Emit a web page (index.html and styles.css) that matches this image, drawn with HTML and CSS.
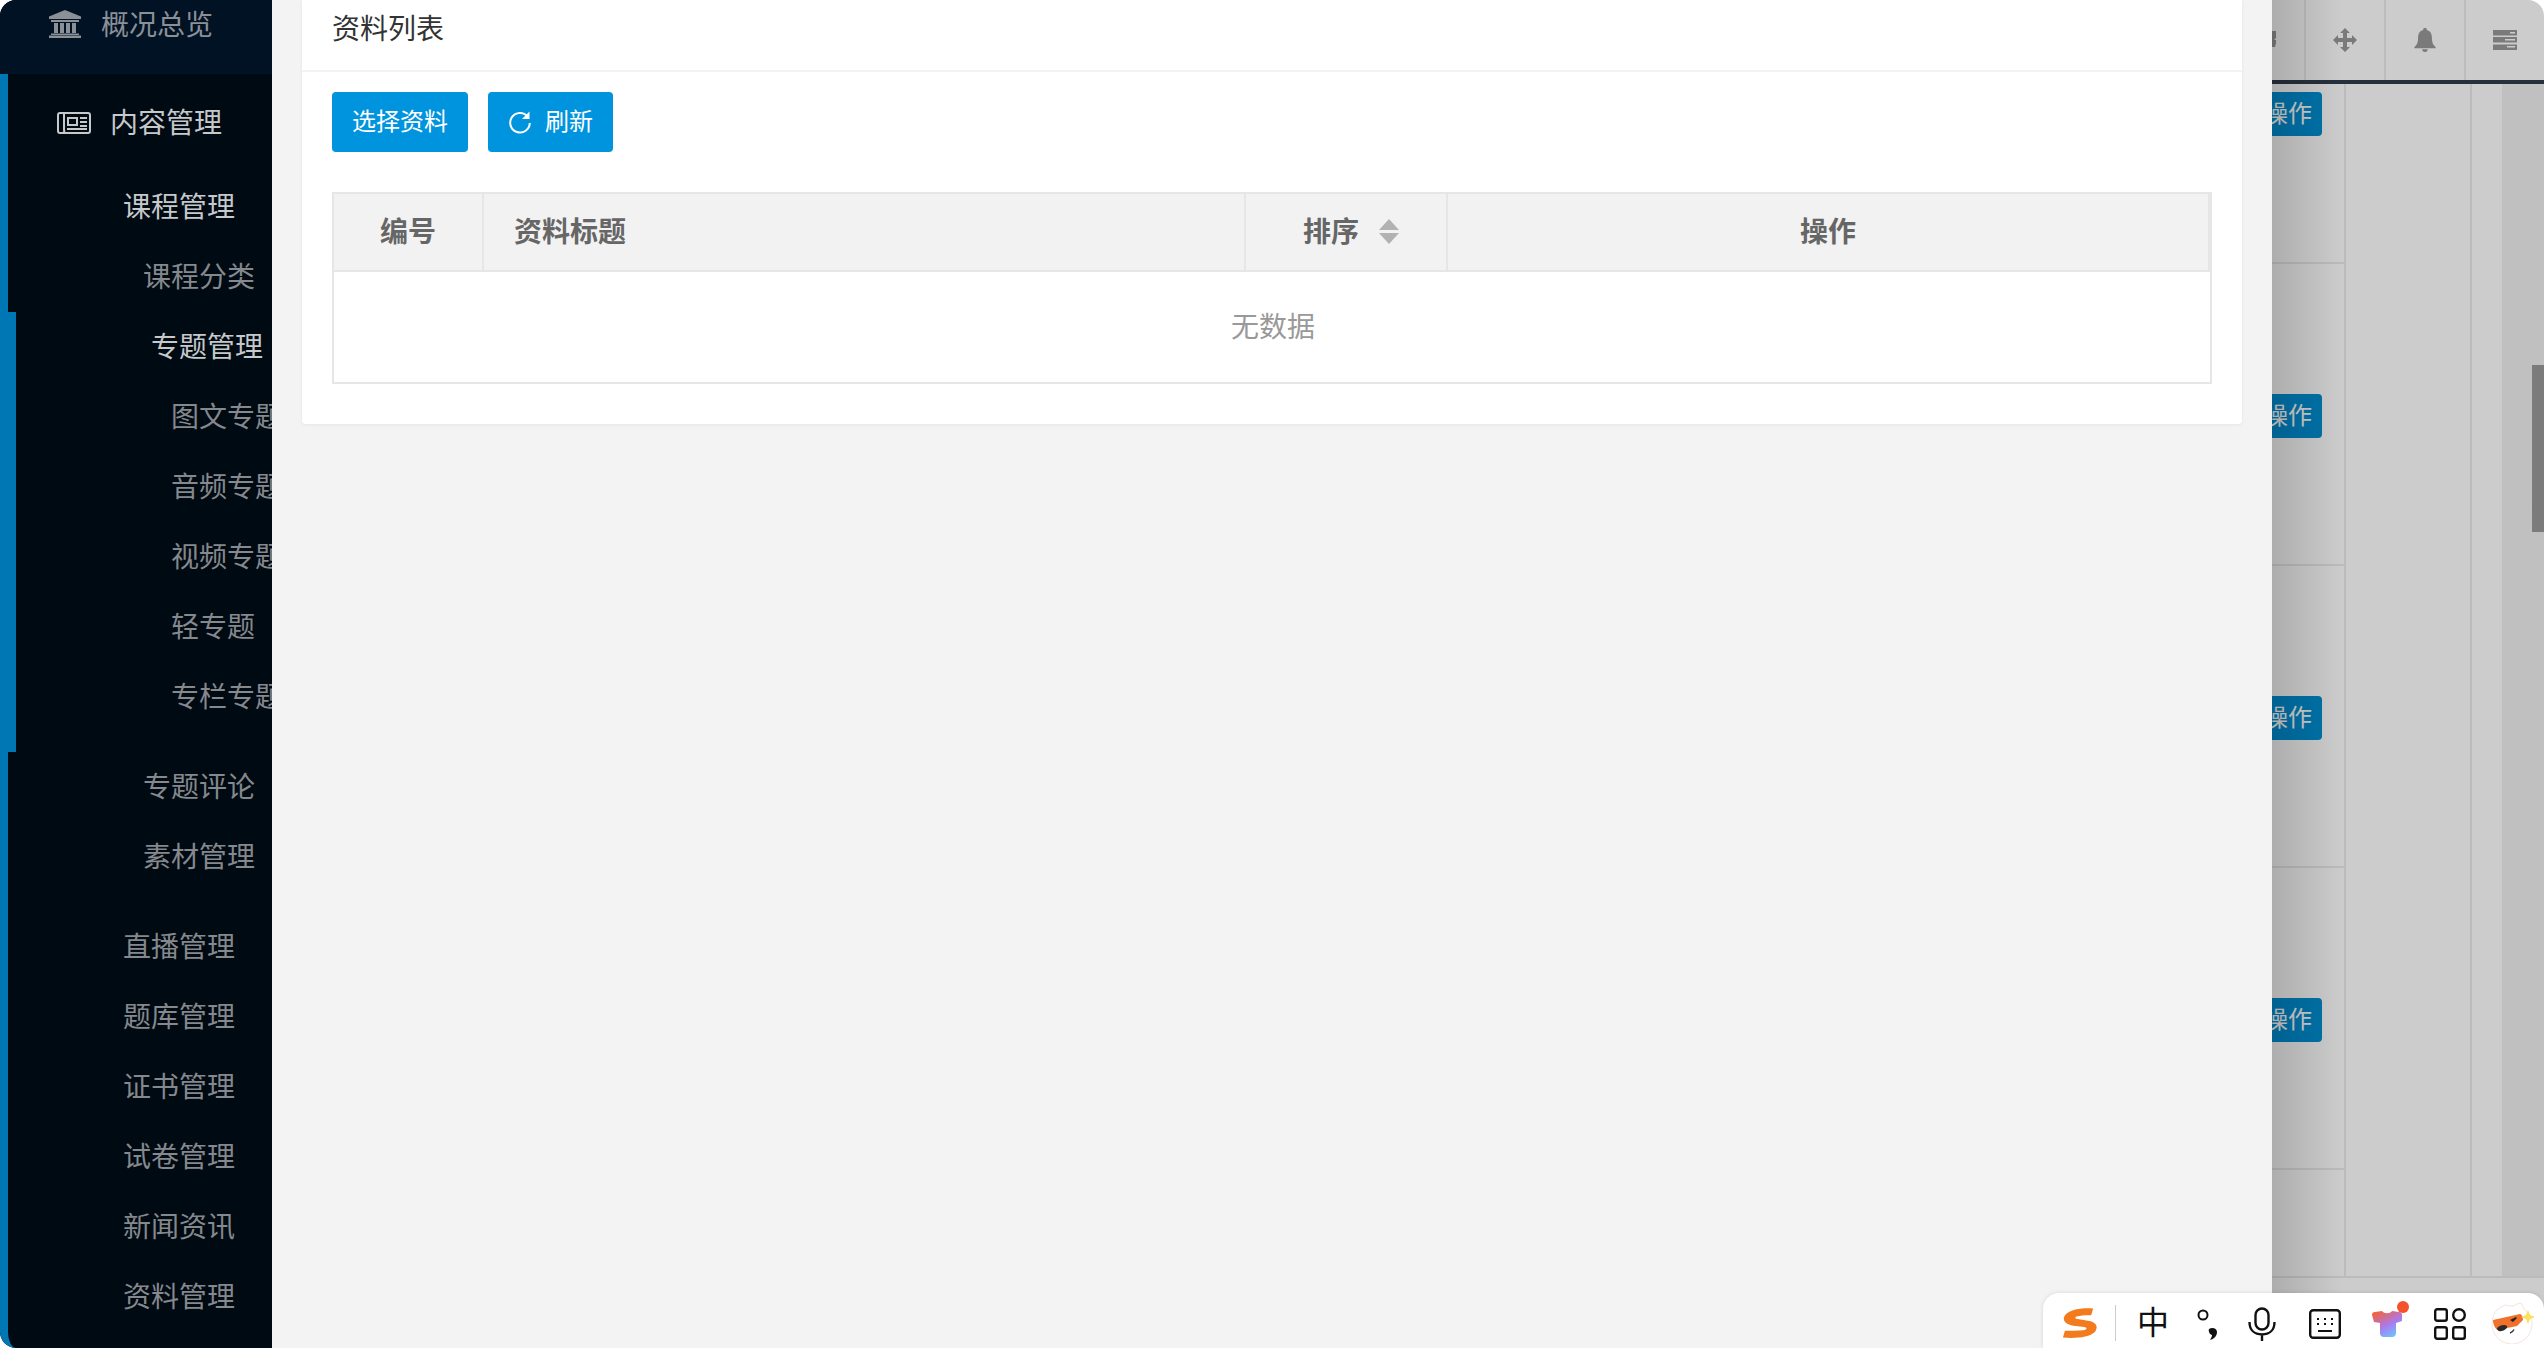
FILE: index.html
```html
<!DOCTYPE html>
<html lang="zh-CN">
<head>
<meta charset="utf-8">
<title>资料列表</title>
<link rel="stylesheet" href="styles.css">
</head>
<body>
<div class="app">
  <aside class="sidebar">
    <div class="nav-top">
      <svg class="ico-bank" viewBox="0 0 32 28"><path d="M16 0 32 6.500V9H0V6.500Z"/><path d="M2 10h28v2H2zM5 13h4v10H5zM11 13h4v10h-4zM17 13h4v10h-4zM23 13h4v10h-4zM2 23.500h28V25H2zM0 25.500h32V28H0z"/></svg>
      <span>概况总览</span>
    </div>
    <div class="group">
      <div class="nav-head">
        <svg class="ico-news" viewBox="0 0 34 22"><rect x="1" y="1" width="32" height="20" rx="2" fill="none" stroke="currentColor" stroke-width="2"/><path d="M7 1v17a2 2 0 0 1-2 3" fill="none" stroke="currentColor" stroke-width="2"/><path d="M10 5h11v9H10zM12 7v5h7V7zM23 5h7v2h-7zM23 9h7v2h-7zM23 13h7v2h-7zM10 16h20v2H10z" fill="currentColor" fill-rule="evenodd"/></svg>
        <span class="head-text">内容管理</span>
      </div>
      <div class="nav-row lv1 on">课程管理</div>
      <div class="nav-row lv2">课程分类</div>
      <div class="topic">
        <div class="nav-row lv2b on">专题管理</div>
        <div class="nav-row lv3">图文专题</div>
        <div class="nav-row lv3">音频专题</div>
        <div class="nav-row lv3">视频专题</div>
        <div class="nav-row lv3">轻专题</div>
        <div class="nav-row lv3">专栏专题</div>
      </div>
      <div class="nav-row lv2">专题评论</div>
      <div class="nav-row lv2 gap-after">素材管理</div>
      <div class="nav-row lv1">直播管理</div>
      <div class="nav-row lv1">题库管理</div>
      <div class="nav-row lv1">证书管理</div>
      <div class="nav-row lv1">试卷管理</div>
      <div class="nav-row lv1">新闻资讯</div>
      <div class="nav-row lv1">资料管理</div>
    </div>
  </aside>

  <main class="panel">
    <section class="card">
      <header class="card-head">资料列表</header>
      <div class="card-body">
        <div class="toolbar">
          <button class="btn">选择资料</button>
          <button class="btn">
            <svg class="ico-refresh" viewBox="0 0 22 24"><path d="M18.600 6.500A9.800 9.800 0 1 0 20.800 13" fill="none" stroke="#fff" stroke-width="2"/><path d="M20.500 1.500V9h-7.500z" fill="#fff"/></svg>
            <span>刷新</span>
          </button>
        </div>
        <table class="grid">
          <colgroup><col class="c1"><col class="c2"><col class="c3"><col class="c4"></colgroup>
          <thead>
            <tr>
              <th>编号</th>
              <th class="left">资料标题</th>
              <th><span class="sort-wrap">排序<span class="sort"><i class="up"></i><i class="down"></i></span></span></th>
              <th>操作</th>
            </tr>
          </thead>
          <tbody>
            <tr><td colspan="4" class="empty">无数据</td></tr>
          </tbody>
        </table>
      </div>
    </section>
  </main>

  <div class="under">
    <div class="under-head">
      <div class="hcell first"><svg class="ico-clip" viewBox="0 0 4 16"><path d="M0 0h4v7L2 9h2v3l-1 4H0z"/></svg></div>
      <div class="hcell">
        <svg class="ico-h" viewBox="0 0 24 24"><path d="M12 0 17 5H14V10H19V7L24 12 19 17V14H14V19H17L12 24 7 19H10V14H5V17L0 12 5 7V10H10V5H7Z"/></svg>
      </div>
      <div class="hcell">
        <svg class="ico-h" viewBox="0 0 24 26"><path d="M12 0a1.800 1.800 0 0 1 1.800 2.300C18 3.300 19.500 6.500 19.500 11c0 5 1.500 7.500 4 9.500v1.500H.5v-1.500c2.500-2 4-4.500 4-9.500 0-4.500 1.500-7.700 5.700-8.700A1.800 1.800 0 0 1 12 0zM9 23h6a3 3 0 0 1-6 0z"/></svg>
      </div>
      <div class="hcell last">
        <svg class="ico-h" viewBox="0 0 24 20"><path fill-rule="evenodd" d="M0 0h24v5.500H0zM17 2v1.500h5V2zM0 7h24v5.500H0zM12 9v1.500h10V9zM0 14.500h24V20H0zM14 16v1.500h8V16z"/></svg>
      </div>
    </div>
    <div class="under-main">
      <div class="col-ops">
        <div class="row first"><button class="op">操作</button></div>
        <div class="row"><button class="op">操作</button></div>
        <div class="row"><button class="op">操作</button></div>
        <div class="row"><button class="op">操作</button></div>
        <div class="row end"></div>
      </div>
      <div class="col-mid"></div>
      <div class="col-narrow"></div>
      <div class="track"><div class="thumb"></div></div>
    </div>
    <div class="under-foot"></div>
  </div>

  <div class="ime">
    <svg class="i-s" viewBox="0 0 38 32"><path d="M33 1C22 0 6 2 3 10c-1 6 5 8 12 9l9 1c3 .5 3 3-1 3.500-6 .5-14 .5-19 .5l-2 7c13 1 27 0 33-6 4-6 0-10-6-11l-12-2c-3-.5-3-2.500 0-3 4-1 9-1 14-1z" fill="#f37b1e"/></svg>
    <span class="i-sep"></span>
    <span class="i-zh">中</span>
    <svg class="i-punct" viewBox="0 0 22 32"><circle cx="6" cy="6" r="4.500" fill="none" stroke="#111" stroke-width="2"/><path d="M12 20c3-2 8-1 8 3 0 4-3 7-7 8 1-2 2-3 2-5-2 0-4-4-3-6z" fill="#111"/></svg>
    <svg class="i-mic" viewBox="0 0 28 34"><rect x="7.500" y="1.500" width="13" height="21" rx="6.500" fill="none" stroke="#111" stroke-width="2.400"/><path d="M1.500 15c0 8 5 12.500 12.500 12.500S26.500 23 26.500 15M14 27v7" fill="none" stroke="#111" stroke-width="2.400"/></svg>
    <svg class="i-kbd" viewBox="0 0 32 30"><rect x="1.200" y="1.200" width="29.600" height="27.600" rx="3" fill="none" stroke="#111" stroke-width="2.400"/><path d="M8 9h2v2H8zM15 9h2v2h-2zM22 9h2v2h-2zM8 14h2v2H8zM15 14h2v2h-2zM22 14h2v2h-2zM9 21h14v2H9z" fill="#111"/></svg>
    <svg class="i-shirt" viewBox="0 0 37 38"><defs><linearGradient id="shirtg" x1=".2" y1="0" x2=".8" y2="1"><stop offset="0" stop-color="#f5603a"/><stop offset=".55" stop-color="#a97bf0"/><stop offset="1" stop-color="#66ccff"/></linearGradient></defs><path d="M0 15c0-2 1-3 3-3l7-1c2 3 8 3 10 0l7 1c2 0 3 1 3 3l0 6-6 2v10c0 2-1 4-4 4h-8c-3 0-4-2-4-4V23l-6-1z" fill="url(#shirtg)"/><circle cx="31" cy="7" r="6" fill="#f4512c"/></svg>
    <svg class="i-apps" viewBox="0 0 32 32"><rect x="1.200" y="1.200" width="11.600" height="11.600" rx="2" fill="none" stroke="#111" stroke-width="2.400"/><circle cx="25" cy="7" r="5.800" fill="none" stroke="#111" stroke-width="2.400"/><rect x="1.200" y="19.200" width="11.600" height="11.600" rx="2" fill="none" stroke="#111" stroke-width="2.400"/><rect x="19.200" y="19.200" width="11.600" height="11.600" rx="2" fill="none" stroke="#111" stroke-width="2.400"/></svg>
    <svg class="i-mascot" viewBox="0 0 44 42"><path d="M7 8c3-2 5-4 8-5 3 1 5 1 8 1 3-1 5-3 8-3 1 2 2 4 3 6 5 4 8 9 8 15a20 20 0 0 1-40 0C2 16 4 11 7 8z" fill="#fff" stroke="#f5e4df"/><path d="M3 18 30 12c2 0 3 4 3 6l-6 6-20 4c-3-3-4-7-4-10z" fill="#f0702c"/><path d="M20 18c2-1 4-2 6-3l1 1-4 4z" fill="#222"/><path d="M7 26c3-3 8-4 10-2 1 3-5 6-8 5-1 0-2-2-2-3z" fill="#2a2a2a"/><path d="M20 31c2-.5 3-1.500 4-3.500" fill="none" stroke="#333" stroke-width="1.500"/><path d="M38 8l2 5 5 2-5 2-2 5-2-5-5-2 5-2z" fill="#f9e15c"/></svg>
  </div>
</div>
</body>
</html>
```
FILE: styles.css
```css
* { box-sizing: border-box; }
html, body { margin: 0; padding: 0; background: #fff; }
body { font-family: "Noto Sans CJK SC", "Liberation Sans", sans-serif; }
.app {
  position: relative;
  display: flex;
  width: 2544px;
  height: 1348px;
  overflow: hidden;
}

/* sidebar */
.sidebar {
  width: 272px;
  flex: none;
  height: 1348px;
  display: flex;
  flex-direction: column;
  overflow: hidden;
  border-radius: 16px 0 0 16px;
  background: #000a13;
  font-size: 28px;
  white-space: nowrap;
}
.nav-top {
  height: 74px;
  flex: none;
  background: #001223;
  color: #8b9097;
  display: flex;
  align-items: flex-start;
  padding-left: 49px;
  line-height: 46px;
}
.ico-bank { width: 32px; height: 28px; margin: 10px 20px 0 0; fill: #8b9097; }
.group {
  flex: 1;
  border-left: 8px solid #0077b5;
  border-bottom-left-radius: 16px;
  padding-top: 14px;
  color: #85888c;
}
.nav-head {
  height: 70px;
  margin-bottom: 14px;
  padding-left: 49px;
  display: flex;
  align-items: center;
  color: #c6c8ca;
}
.head-text { margin-bottom: 4px; }
.ico-news { width: 34px; height: 22px; margin-right: 19px; flex: none; color: #c6c8ca; }
.nav-row { height: 70px; line-height: 66px; }
.nav-row.on { color: #c6c8ca; }
.lv1 { padding-left: 115px; }
.lv2 { padding-left: 135px; }
.lv2b { padding-left: 135px; }
.lv3 { padding-left: 155px; }
.gap-after { margin-bottom: 20px; }
.topic {
  border-left: 8px solid #0077b5;
  padding-bottom: 20px;
}

/* main panel */
.panel {
  width: 2000px;
  flex: none;
  height: 1348px;
  background: #f3f3f3;
  padding: 0 30px;
}
.card {
  background: #fff;
  border-radius: 0 0 4px 4px;
  box-shadow: 0 1px 4px rgba(0, 0, 0, .06);
}
.card-head {
  height: 72px;
  line-height: 54px;
  padding-left: 30px;
  border-bottom: 2px solid #f3f3f3;
  font-size: 28px;
  color: #333;
}
.card-body { padding: 20px 30px 40px; }
.toolbar { display: flex; gap: 20px; margin-bottom: 40px; }
.btn {
  height: 60px;
  padding: 0 20px 6px;
  border: 0;
  border-radius: 4px;
  background: #0094de;
  color: #fff;
  font: inherit;
  font-size: 24px;
  display: flex;
  align-items: center;
}
.ico-refresh { width: 22px; height: 24px; margin: 6px 14px 0 1px; }
.grid {
  width: 1880px;
  table-layout: fixed;
  border-collapse: separate;
  border-spacing: 0;
  border: 2px solid #e6e6e6;
  font-size: 28px;
}
.c1 { width: 150px; }
.c2 { width: 762px; }
.c3 { width: 202px; }
.c4 { width: 762px; }
.grid th {
  height: 78px;
  padding: 0 0 4px;
  background: #f2f2f2;
  border-right: 2px solid #e6e6e6;
  border-bottom: 2px solid #e6e6e6;
  color: #666;
  font-weight: 700;
  text-align: center;
}
.grid th.left { text-align: left; padding-left: 30px; }
.sort-wrap { display: inline-flex; align-items: center; margin-left: 10px; }
.sort { display: inline-flex; flex-direction: column; gap: 3px; margin: 2px 0 0 20px; }
.sort i { display: block; width: 0; height: 0; border-left: 10px solid transparent; border-right: 10px solid transparent; }
.sort .up { border-bottom: 11px solid #b2b2b2; }
.sort .down { border-top: 11px solid #b2b2b2; }
.empty { height: 110px; padding: 0 0 4px 2px; text-align: center; color: #999; }

/* dimmed page behind the panel */
.under {
  position: relative;
  width: 272px;
  flex: none;
  height: 1348px;
  overflow: hidden;
  display: flex;
  flex-direction: column;
  border-top-right-radius: 16px;
  background: #fff;
}
.under::after {
  content: "";
  position: absolute;
  inset: 0;
  background: linear-gradient(90deg, rgba(0, 0, 0, .32), rgba(0, 0, 0, .2) 70px);
}
.under-head {
  height: 84px;
  flex: none;
  display: flex;
  border-bottom: 4px solid #2f3c4b;
}
.hcell {
  width: 80px;
  display: flex;
  align-items: center;
  justify-content: center;
  border-right: 2px solid #ececec;
  flex: none;
}
.hcell.first { width: 34px; justify-content: flex-start; }
.hcell.last { flex: 1; border-right: 0; }
.ico-clip { width: 4px; height: 16px; fill: #999; margin-top: -2px; }
.ico-h { width: 24px; height: 24px; fill: #999; }
.under-main { display: flex; height: 1192px; flex: none; }
.col-ops { width: 74px; flex: none; border-right: 2px solid #eaeaea; overflow: hidden; }
.row {
  height: 302px;
  border-bottom: 2px solid #eaeaea;
  display: flex;
  justify-content: flex-end;
  align-items: center;
  padding: 4px 22px 0 0;
}
.row.first { height: 180px; align-items: flex-start; padding-top: 8px; }
.row.end { height: 106px; border-bottom: 0; }
.op {
  flex: none;
  width: 68px;
  height: 44px;
  padding: 0 0 4px;
  border: 0;
  border-radius: 4px;
  background: #008fd4;
  color: #fff;
  font: inherit;
  font-size: 24px;
  line-height: 40px;
}
.col-mid { width: 126px; flex: none; border-right: 2px solid #eaeaea; }
.col-narrow { width: 30px; flex: none; }
.track { flex: 1; background: #f0f0f0; padding-top: 281px; display: flex; justify-content: flex-end; }
.thumb { width: 12px; height: 167px; background: #9a9a9a; }
.under-foot { flex: 1; border-top: 2px solid #eaeaea; }

/* floating input method bar */
.ime {
  position: absolute;
  right: 0;
  bottom: 0;
  z-index: 2;
  width: 501px;
  height: 55px;
  background: #fff;
  border-radius: 16px 16px 0 0;
  box-shadow: 0 0 4px rgba(0, 0, 0, .12);
  display: flex;
  align-items: flex-start;
}
.i-s { width: 37px; height: 32px; margin: 14px 0 0 18px; flex: none; }
.i-sep { width: 1px; height: 36px; margin: 12px 0 0 17px; background: #ccc; flex: none; }
.i-zh { width: 32px; margin: 8px 0 0 21px; font-size: 32px; line-height: 38px; color: #111; flex: none; }
.i-punct { width: 22px; height: 32px; margin: 16px 0 0 28px; flex: none; }
.i-mic { width: 28px; height: 34px; margin: 14px 0 0 29px; flex: none; }
.i-kbd { width: 32px; height: 30px; margin: 16px 0 0 33px; flex: none; }
.i-shirt { width: 37px; height: 38px; margin: 7px 0 0 31px; flex: none; }
.i-apps { width: 32px; height: 32px; margin: 15px 0 0 25px; flex: none; }
.i-mascot { width: 44px; height: 42px; margin: 9px 0 0 24px; flex: none; }
```
